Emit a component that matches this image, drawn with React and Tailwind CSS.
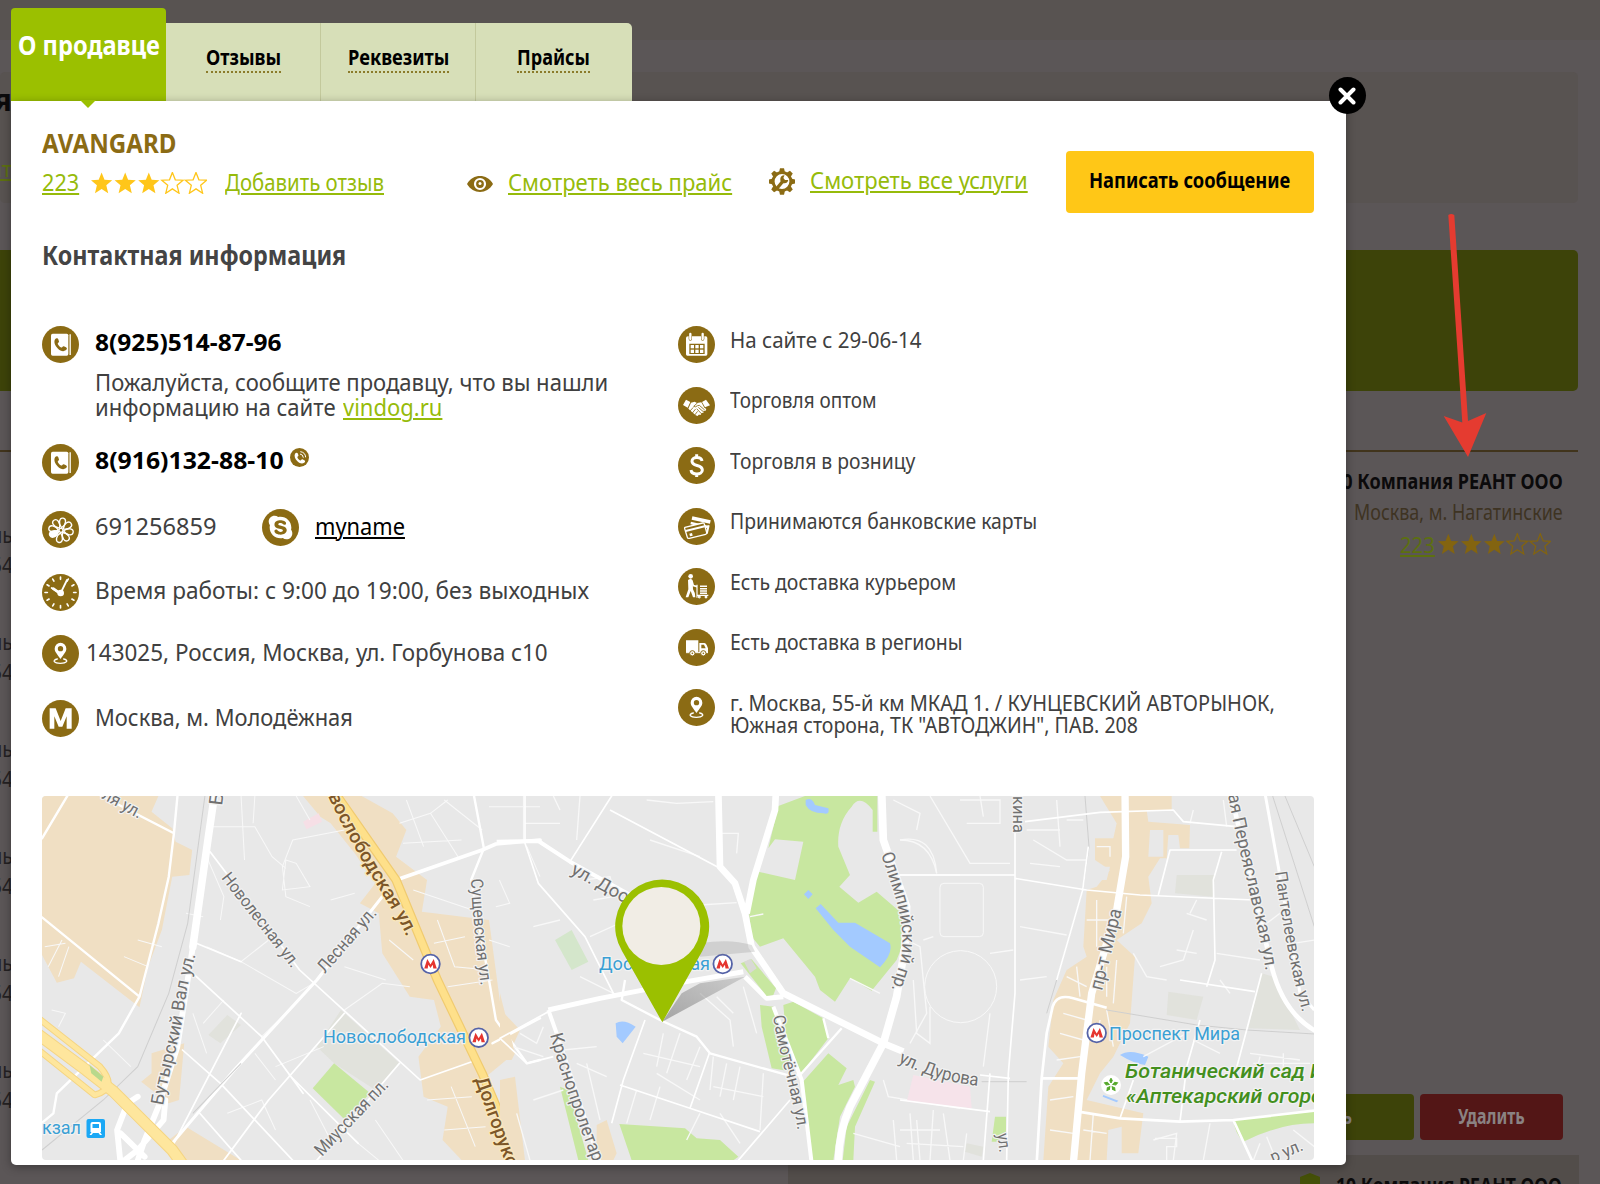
import { useLayoutEffect, useRef, useState } from "react";
import { FaSkype } from "react-icons/fa";

function Fit({ w, className = "", children }) {
  const ref = useRef(null);
  const [k, setK] = useState(1);
  useLayoutEffect(() => {
    setK(w / ref.current.offsetWidth);
  }, [w]);
  return (
    <span className="block shrink-0 whitespace-nowrap" style={{ width: w }}>
      <span ref={ref} className={"inline-block origin-left " + className} style={{ transform: `scaleX(${k})` }}>
        {children}
      </span>
    </span>
  );
}

const LINK = "text-[#96bb0a] underline decoration-[1.5px] underline-offset-[2px]";

function Stars({ className, color }) {
  const d = "M0-10.8 2.9-3.4 10.6-3 4.7 2.1 6.6 10 0 5.7-6.6 10-4.7 2.1-10.6-3-2.9-3.4Z";
  return (
    <svg viewBox="0 0 116 22" className={className}>
      {[0, 1, 2, 3, 4].map((i) => (
        <path
          key={i}
          d={d}
          transform={`translate(${10.6 + i * 23.6} 11.2)`}
          fill={i < 3 ? color : "none"}
          stroke={color}
          strokeWidth={i < 3 ? 0 : 1.3}
        />
      ))}
    </svg>
  );
}

/* ---------- round brown icons, drawn on a 111 x 111 grid ---------- */

function Badge({ children }) {
  return (
    <svg viewBox="0 0 111 111" className="size-[37px] shrink-0">
      <circle cx="55.5" cy="55.5" r="55.5" fill="#8b6b14" />
      {children}
    </svg>
  );
}

const HANDSET =
  "M-15-16c4-6 9-5 11 0l2 7c0 3-5 4-4 7 2 5 6 9 11 11 3 1 4-5 8-4l7 3c4 2 4 7-1 10-7 5-17 2-25-6-9-8-13-20-9-28Z";

const PhoneBook = () => (
  <Badge>
    <rect x="27" y="23" width="52" height="66" rx="5" fill="#fff" />
    <path d="M84.500 25v62" stroke="#fff" strokeWidth="4" />
    <path d={HANDSET} transform="translate(53 56) scale(.95)" fill="#8b6b14" />
  </Badge>
);

const Flower = () => (
  <Badge>
    <g fill="none" stroke="#fff" strokeWidth="4">
      {[0, 45, 90, 135, 180, 270, 315].map((a) => (
        <path key={a} d="M0-8C-13-20-11-37 0-37S13-20 0-8Z" transform={`translate(57 58) rotate(${a + 10})`} />
      ))}
      <circle cx="57" cy="58" r="6" />
    </g>
    <path d="M0-8C-13-20-11-37 0-37S13-20 0-8Z" transform="translate(57 58) rotate(245)" fill="#fff" stroke="#fff" strokeWidth="4" />
  </Badge>
);

const Skype = () => (
  <Badge>
    <g transform="translate(15 15)">
      <FaSkype size={81} color="#fff" />
    </g>
  </Badge>
);

const Clock = () => (
  <Badge>
    <g stroke="#fff" strokeWidth="5" strokeLinecap="round">
      {[0, 30, 60, 90, 120, 150, 180, 210, 240, 270, 300, 330].map((a) => (
        <path key={a} d="M55.5 9v7" transform={`rotate(${a} 55.5 55.5)`} />
      ))}
      <path d="M55 59 75 18M54 58 29 42" strokeWidth="5.5" />
    </g>
    <path d="M55 59 34 44" stroke="#fff" strokeWidth="8" strokeLinecap="round" />
    <circle cx="56" cy="57" r="10" fill="#fff" />
  </Badge>
);

const Pin = () => (
  <Badge>
    <path
      fillRule="evenodd"
      d="M55.5 72C45 56 38 50 38 41a17.500 17.500 0 0 1 35 0c0 9-7 15-17.500 31Zm0-39a8 8 0 1 0 0 16 8 8 0 0 0 0-16Z"
      fill="#fff"
    />
    <path d="M46 72c-17 4-10 13 9 13s27-9 10-13" fill="none" stroke="#fff" strokeWidth="4" strokeLinecap="round" />
  </Badge>
);

const Metro = () => (
  <Badge>
    <path d="M23 86V25h18l15 38 15-38h18v61H74V49L61 80H50L37 49v37Z" fill="#fff" />
  </Badge>
);

const Calendar = () => (
  <Badge>
    <path
      fillRule="evenodd"
      d="M24 36q0-5 6-5h2v8q0 5 5 5t5-5v-8h27v8q0 5 5 5t5-5v-8h4q5 0 5 5v49q0 4-4 4H28q-4 0-4-4ZM34 53v31h46V53Z"
      fill="#fff"
    />
    <path d="M37 24v15M74 24v15" stroke="#fff" strokeWidth="7" strokeLinecap="round" />
    <g fill="#fff">
      {[0, 1, 2].map((i) => (
        <g key={i}>
          <rect x={38 + i * 14} y="57" width="10" height="10" />
          <rect x={38 + i * 14} y="71" width="10" height="10" />
        </g>
      ))}
    </g>
  </Badge>
);

const Hands = () => (
  <Badge>
    <path d="M24 38 37 45 29 62 15 54ZM84 38 72 45 81 61 96 55Z" fill="#fff" />
    <path d="M39 47 50 44 57 48 70 46 79 62 85 66 82 72 76 71 77 77 70 78 69 83 62 83 59 87 53 85 31 65Z" fill="#fff" />
    <g fill="none" stroke="#8b6b14" strokeWidth="2.500" strokeLinecap="round">
      <path d="M58 48 47 58q5 4 12-2l5-1 15 13M62 62 76 74M57 66 69 79M37 71 45 62M44 77 52 67M51 83 58 74" />
    </g>
  </Badge>
);

const Dollar = () => (
  <Badge>
    <path d="M72 42C70 28 42 28 42 43c0 17 31 8 31 26 0 16-32 16-34 0M56 22v12M56 78v12" fill="none" stroke="#fff" strokeWidth="9" />
  </Badge>
);

const Cards = () => (
  <Badge>
    <g fill="none" stroke="#fff">
      <path d="m42 30 55 12" strokeWidth="11" />
      <path d="m38 45 52 12" strokeWidth="7" />
      <path d="m92 52-5 22-8 0" strokeWidth="6" />
      <path d="m21 58 53-13q4-1 5 3l7 25q1 4-3 6L34 91q-5 1-6-3l-8-26q-1-3 1-4Z" fill="#8b6b14" strokeWidth="4" />
      <path d="m23 69 57-14" strokeWidth="6" />
      <path d="m35 81 8-2" strokeWidth="8" />
    </g>
  </Badge>
);

const Courier = () => (
  <Badge>
    <circle cx="38" cy="25" r="7" fill="#fff" />
    <path d="M30 36q9-6 14 1l1 27q8 12 7 24h-7l-7-19-7 19h-8l8-24Z" fill="#fff" />
    <path d="m42 40 4 13 11 3" fill="none" stroke="#fff" strokeWidth="5" />
    <g fill="none" stroke="#fff" strokeWidth="3.500">
      <path d="M57 50v32h34M57 84v5" />
      <path d="M66 55h21M66 62h21M66 69h21M66 76h21" strokeWidth="4.500" />
      <circle cx="64" cy="87" r="2.500" />
      <circle cx="84" cy="87" r="2.500" />
    </g>
  </Badge>
);

const Truck = () => (
  <Badge>
    <path d="M24 34h37v36H24ZM64 42h15q4 0 7 6l4 10v14H64Z" fill="#fff" />
    <path d="M70 47h8l5 11H70Z" fill="#8b6b14" />
    <path d="M24 71h66" stroke="#fff" strokeWidth="3" />
    <g fill="#fff" stroke="#8b6b14" strokeWidth="3">
      <circle cx="43" cy="73" r="8" />
      <circle cx="76" cy="73" r="8" />
    </g>
    <circle cx="43" cy="73" r="2.500" fill="#8b6b14" />
    <circle cx="76" cy="73" r="2.500" fill="#8b6b14" />
  </Badge>
);

const Eye = () => (
  <svg viewBox="0 0 26 16" className="mt-[11px] h-4 w-[26px] shrink-0">
    <path d="M0 8C6-2.600 20-2.600 26 8 20 18.600 6 18.600 0 8Z" fill="#8b6b14" />
    <circle cx="13" cy="8" r="5" fill="#8b6b14" stroke="#fff" strokeWidth="2.200" />
    <circle cx="13" cy="7.500" r="1.500" fill="#fff" />
  </svg>
);

const Gear = () => (
  <svg viewBox="-13 -13.500 26 27" className="mt-1 h-[27px] w-[26px] shrink-0">
    {[0, 45, 90, 135, 180, 225, 270, 315].map((a) => (
      <path key={a} d="M-3-9-2-13.200H2L3-9Z" transform={`rotate(${a})`} fill="#8b6b14" />
    ))}
    <circle r="8.900" fill="#fff" stroke="#8b6b14" strokeWidth="3" />
    <path d="M-4.800 6.500 1.500-1" stroke="#8b6b14" strokeWidth="3.400" />
    <path d="M2.500-6.300A4 4 0 1 0 6.200-1.500L3-1.500 1.400-3.400Z" fill="#8b6b14" />
  </svg>
);

/* ---------- dimmed page behind the dialog ---------- */

function Backdrop() {
  return (
    <div className="flex h-full flex-col">
      <div className="h-10 shrink-0 bg-[#585351]" />
      <div className="mt-8 h-[131px] w-[1578px] shrink-0 rounded-[5px] bg-[#585351]">
        <div className="flex w-[12px] flex-col items-end overflow-hidden">
          <b className="mt-[6px] text-[30px] leading-[44px] text-[#0b0a0b]">я</b>
          <span className="mt-[32px] text-[22px] leading-[28px] text-[#5d7010] underline underline-offset-2">ат</span>
        </div>
      </div>
      <div className="-ml-2 mt-[47px] h-[141px] w-[1586px] shrink-0 rounded-[5px] bg-[#3d4309]" />
      <div className="mt-[59px] h-[2px] w-[1578px] shrink-0 bg-[#41341c]" />
      <div className="flex h-[704px] shrink-0 justify-between">
        <div className="flex w-[13px] flex-col items-end overflow-hidden pt-[68px] text-[21px] leading-[30px] text-[#242122]">
          {[0, 1, 2, 3, 4, 5].map((i) => (
            <div key={i} className="flex h-[107px] shrink-0 flex-col items-end">
              <Fit w={22}>ль</Fit>
              <Fit w={22}>54</Fit>
            </div>
          ))}
        </div>
        <div className="flex w-[300px] flex-col items-end pr-[37px]">
          <b className="mt-[14px] text-[21px] leading-[30px] text-[#0b0a0b]">
            <Fit w={231}>10 Компания РЕАНТ ООО</Fit>
          </b>
          <span className="mt-[1px] text-[21px] leading-[30px] text-[#3e3322]">
            <Fit w={209}>Москва, м. Нагатинские</Fit>
          </span>
          <div className="mt-[2px] flex items-center pr-[12px]">
            <Fit w={35} className="text-[22px] leading-[30px] text-[#5d7010] underline decoration-[1.5px] underline-offset-2">223</Fit>
            <Stars className="ml-[3px] h-[22px] w-[113px]" color="#836410" />
          </div>
          <div className="mt-[535px] flex gap-[6px]">
            <div className="flex h-[46px] w-[143px] justify-center rounded-[4px] bg-[#3d4309] text-[21px] leading-[45px] font-bold text-[#858080]">
              <Fit w={18}>ть</Fit>
            </div>
            <div className="flex h-[46px] w-[143px] justify-center rounded-[4px] bg-[#531616] text-[21px] leading-[45px] font-bold text-[#8a8282]">
              <Fit w={67}>Удалить</Fit>
            </div>
          </div>
        </div>
      </div>
      <div className="ml-[788px] mt-[-1px] flex h-[40px] w-[791px] shrink-0 justify-end bg-[#524d4a] pr-[17px]">
        <svg viewBox="0 0 20 22" className="mt-[18px] h-[22px] w-5">
          <path d="M10 0 20 4v8c0 6-6 9-10 10C6 21 0 18 0 12V4Z" fill="#445008" />
        </svg>
        <b className="ml-4 mt-[15px] text-[21px] leading-[30px] text-[#0b0a0b]">
          <Fit w={226}>10 Компания РЕАНТ ООО</Fit>
        </b>
      </div>
    </div>
  );
}

/* ---------- city map ---------- */

function MetroMark({ x, y }) {
  return (
    <g transform={`translate(${x} ${y})`}>
      <circle r="9.300" fill="#fff" stroke="#5563a8" strokeWidth="1.800" />
      <path d="M-6.300 4.500-3.200-5 0 0.500 3.200-5 6.300 4.500H2.800L2.200 0.800 0 4-2.200 0.800-2.800 4.500Z" fill="#e5352f" />
    </g>
  );
}

const STREETS = [
  ["ля ул.", "M101 798 139 819", 43, 17],
  ["Б", "M222 806 224 790", 13, 19],
  ["Бутырский Вал ул.", "M163 1106C170 1066 180 1040 184 1010S192 970 196 953", 155, 18],
  ["Новолесная ул.", "M221 878 293 970", 115, 17],
  ["Лесная ул.", "M325 974 378 913", 80, 18],
  ["Сущевская ул.", "M471 879C472 910 476 950 481 987", 107, 17],
  ["Миусская пл.", "M322 1157 391 1084", 98, 18],
  ["ул. Достоевского", "M570 873 704 947", 150, 18],
  ["Краснопролетарская", "M550 1035C562 1080 580 1130 606 1195", 172, 18],
  ["Самотёчная ул.", "M773 1016C780 1060 792 1090 798 1132", 117, 17],
  ["Олимпийский пр.", "M881 854C893 890 905 920 902 950 901 965 894 978 891 992", 140, 18],
  ["ул. Дурова", "M898 1062C915 1070 940 1082 980 1086", 84, 18],
  ["кина", "M1013 796 1013 834", 37, 17],
  ["ая Переяславская ул.", "M1228 795C1240 860 1258 920 1266 972", 180, 18],
  ["Пантелеевская ул.", "M1275 872C1282 920 1290 970 1303 1014", 143, 17],
  ["пр-т Мира", "M1102 991 1122 909", 83, 19],
  ["ул.", "M997 1134 1000 1156", 19, 17],
  ["р ул.", "M1273 1163 1306 1149", 34, 17],
];

function CityMap() {
  return (
    <svg viewBox="42 796 1272 364" className="block h-[364px] w-[1272px] rounded-[4px]">
      <defs>
        <linearGradient id="pinShadow" x1="0" y1="1" x2="1" y2="0">
          <stop offset="0" stopColor="#777" stopOpacity=".6" />
          <stop offset="1" stopColor="#777" stopOpacity=".25" />
        </linearGradient>
      </defs>
      <rect x="42" y="796" width="1272" height="364" fill="#e8e8e8" />

      {/* west: land */}
      <g transform="translate(0 780) scale(.34439 .33333)">
        <g fill="#f0dfc3">
          <path d="M122 48H460L440 95 500 145 510 185 558 210 550 285 500 290 470 450 430 560 405 682 235 545 215 595 165 608 122 525Z" />
          <path d="M880 48H1050L1140 100 1180 150 1150 230 1240 300 1225 395 1420 420 1455 690 1510 750 1470 840 1400 900 1430 1000 1520 1140H1340L1285 1080 1300 980 1230 950 1215 830 1280 740 1260 660 1190 650 1110 520 1100 400 1045 370 1090 310 1030 220 960 130 930 110Z" />
          <path d="M440 820 535 790 520 960 490 970 410 905 440 880ZM490 1080 540 1040 700 1141H520Z" />
        </g>
        <path d="M990 690 1160 850 1090 930 970 850 920 800ZM605 765 660 705 700 735 640 790Z" fill="#e1e2dc" />
        <path d="M970 850 1075 940 1000 1018 908 925Z" fill="#c8e7a0" />
        <path d="M880 125 925 100 935 125 890 148Z" fill="#f6dfe6" />
        <g fill="none" stroke="#f8f8f8" strokeWidth="3">
          <path d="M610 140H740L790 230 830 265M700 48 710 240M740 48 735 130M860 48 900 120M1000 150 850 180 820 260 830 350 900 380M600 230 650 350 640 420M830 240 860 250 900 320 820 330ZM960 360 1030 340M1160 130 1250 100 1300 60M1170 190 1340 180M1250 100 1330 230M1290 60 1400 150M1420 80H1568M1520 48V180M1180 60 1230 200M1200 330 1400 400M1270 420 1320 560 1420 570M1260 490 1350 470M1300 620 1430 600M1420 480 1480 500M1450 300 1480 370 1440 380M1530 200 1568 290M1130 480 1200 540M1240 960 1370 950M1290 1050 1410 1040M1310 920 1380 1100M560 700 600 820M650 660 590 730M600 500 700 545 780 480M700 545 860 640 910 610M760 770 860 670M740 820 800 900M800 860 940 800M660 1000 760 960 800 1050M900 960 960 1080M1040 1090 1100 1141M1090 1020 1170 1141M1000 560 1120 600M1000 690 1110 610 1190 620M130 500 190 490M140 560 180 480M170 590 200 500M150 690 190 700 170 740M300 780 380 860M540 400 590 410M400 480 470 500M360 530 430 560" />
        </g>
        <g fill="none" stroke="#fff" strokeLinecap="round" strokeLinejoin="round">
          <path d="M200 40 122 175M280 40 505 160M516 40 505 160 490 290 460 430 405 650 345 760 165 940 155 1000 120 1030M122 412 405 650" strokeWidth="7" />
          <path d="M610 215 870 570 1220 900 1370 845M560 580 760 770 880 940M530 810 640 910 850 1141M580 1000 700 1141M840 885 1040 1090M1160 850 920 1141M1000 700 780 960 650 1141M700 700 500 1100M570 490 700 545" strokeWidth="5" />
          <path d="M1110 350 920 600 680 870 500 1090" strokeWidth="9" />
          <path d="M1150 300 1400 210 1440 192 1568 180" strokeWidth="11" />
          <path d="M1375 40 1405 205 1368 300 1420 600 1440 720 1530 850 1568 840M1430 790 1568 715" strokeWidth="7" />
          <path d="M625 30 605 170 560 500" strokeWidth="22" />
          <path d="M560 500 515 800 460 980 420 1080 400 1141M480 960 475 1020 400 1110 350 1150 340 1050 370 970 400 950M350 1060 420 1130" strokeWidth="17" />
        </g>
        <path d="M595 48 545 430 490 640 400 860 300 960 122 1110M700 850 560 1000" fill="none" stroke="#cfcfcf" strokeWidth="3" />
        <g fill="none" strokeLinejoin="round">
          <path d="M100 755 250 870 330 935 500 1110 535 1160" stroke="#f5d583" strokeWidth="36" />
          <path d="M100 705 290 860Q345 925 275 945L100 800" stroke="#f5d583" strokeWidth="20" />
          <path d="M100 755 250 870 330 935 500 1110 535 1160" stroke="#fee69d" strokeWidth="30" />
          <path d="M100 705 290 860Q345 925 275 945L100 800" stroke="#fee69d" strokeWidth="14" />
          <path d="M260 855 300 890 295 905 265 880Z" fill="#b8d98c" />
          <path d="M960 20 1150 300 1270 600 1400 880 1515 1160" stroke="#f0cb70" strokeWidth="27" />
          <path d="M960 20 1150 300 1270 600 1400 880 1515 1160" stroke="#fee08a" strokeWidth="20" />
        </g>
      </g>

      {/* centre */}
      <g transform="translate(500 780) scale(.33333)">
        <g fill="#c8e7a0">
          <path d="M835 78 915 48H1132V155H1118V90Q1080 40 1055 80 1010 130 1015 200L1050 285 1018 320 1075 368 1130 335 1205 400Q1222 470 1190 540L1115 632 1050 595 1005 665 960 630 945 590 850 475 780 500 755 470 745 380 775 275 885 300 910 185 825 178 805 205Z" />
          <path d="M780 675 820 680 880 875 815 865 785 740ZM850 675 880 665 970 715 985 775 900 885 860 790ZM985 820 1040 865 1015 915 1060 900 1065 920 1020 1010 1000 1141H935L905 910ZM1110 900 1125 905 1065 1040 1060 1141H1028L1040 1040ZM358 1032 555 1045 590 1075 660 1080 715 1130 700 1141H395ZM180 920 205 930 265 1141H235Z" />
        </g>
        <path d="M165 480 215 450 265 545 215 570Z" fill="#d4e6cb" />
        <path d="M0 640 45 820 35 840 0 840ZM0 900 45 890 75 1141H0ZM290 1035 320 1020 350 1120 340 1141H290Z" fill="#f0dfc3" />
        <path d="M917 60Q935 50 945 75L985 85Q990 105 970 100 930 100 917 75ZM925 330 938 343 925 357 912 343ZM947 385 962 372 1015 428 1065 428 1170 490Q1180 520 1140 562L1050 500 1000 450ZM347 730Q370 715 407 740L368 790 350 770Z" fill="#a3caff" />
        <g fill="none" stroke="#f8f8f8" strokeWidth="4">
          <path d="M75 130H180M240 48 230 180M160 48 180 90M440 60 530 70 640 65M450 180 600 230M660 160H715L710 220M250 300 330 290 345 350M280 360 340 350M100 440 180 420M270 470 380 420M600 375 710 368M750 410 790 402M60 760 110 790 130 740M40 800 130 830M190 810 290 800M230 850 320 890M260 850 300 1020M490 760 470 860M540 760 500 880M430 820 600 860M600 800 560 900M470 880 600 960M640 830 630 930M680 850 660 950M720 860 700 960M640 920 790 950M790 880 780 1050M600 1000 560 1080M480 920 450 1020M410 930 380 1030M660 1000 720 1090M600 640 690 720 700 800M650 650 700 700M730 620 770 760M240 590 360 650M100 960 190 930M50 1000 90 1141M1150 900 1165 950 1380 985M1060 1060 1200 1100M1180 1020 1190 1140M1230 1000 1240 1141M1300 990 1290 1141M1180 60 1260 100 1250 150M1200 180Q1290 180 1310 280M1180 285H1380M1240 600 1250 760 1290 790 1290 680M1270 480 1300 470M1050 595 1140 640" />
        </g>
        <g fill="none" stroke="#fff" strokeLinejoin="round">
          <path d="M340 40 210 245M75 40 75 190 115 310 255 470 345 650M330 90 660 265M435 720 370 900 335 1030M360 915 570 985 780 1055M628 820 570 985M870 960 715 1141M145 695 0 775 80 850 160 830" strokeWidth="5" />
          <path d="M375 600 365 660 480 720 590 770 630 820 860 885 900 885 1025 745M970 715 985 775" strokeWidth="7" />
          <path d="M-10 185 115 183 210 245 400 350M145 690 170 760 300 1150M820 680 905 900 935 1150" strokeWidth="12" />
          <path d="M145 690 300 655 560 605 730 575M735 590 800 655 850 650" strokeWidth="15" />
          <path d="M655 30 660 260 705 310 735 400 755 500 850 640 1150 790 1210 815M828 30 825 90 760 300 740 400" strokeWidth="20" />
          <path d="M1145 30 1150 180 1220 380 1215 500 1190 650 1150 790 1050 980Q1015 1060 1015 1150" strokeWidth="23" />
        </g>
        <path d="M722 550 755 538 828 625 820 645 800 648Z" fill="#c8e7a0" />
        <path d="M732 545 752 536 770 565 750 580Z" fill="#d9d9d5" />
      </g>

      {/* east */}
      <g transform="translate(900 780) scale(.33333)">
        <path d="M600 48H815V90H740L745 125 870 135 868 205H840L835 165H805L800 235H780L745 290 755 370 725 430 650 480 705 530 690 730 640 830 600 880 560 960 730 1000 715 1120H665V1040L625 1050 620 1141H430L445 920 490 850 445 800 460 660 500 570 560 530 550 500 560 330 590 320 630 270 585 240V175H640L650 130Z" fill="#f0dfc3" />
        <path d="M750 150H790V230H745ZM605 260H630L620 300H600Z" fill="#e8e8e8" />
        <path d="M830 285H945L938 350 825 340ZM805 635 910 650 890 720 800 705ZM1085 580 1120 590 1200 750 1045 745ZM200 1090 250 1100 245 1130 195 1115Z" fill="#e1e2dc" />
        <path d="M40 885 210 920 215 985 20 965Z" fill="#f6e3ea" />
        <path d="M1000 1020Q1120 1000 1243 995V1030Q1140 1030 1030 1085 1005 1060 1000 1020ZM285 1010H318V1060L290 1085H275Z" fill="#c8e7a0" />
        <path d="M660 825Q690 805 745 830L735 855Q700 850 660 825ZM610 945 655 962 650 967 608 950Z" fill="#a3caff" />
        <g fill="none" stroke="#f8f8f8" strokeWidth="4">
          <circle cx="182" cy="620" r="108" strokeWidth="3" />
          <rect x="120" y="310" width="130" height="160" rx="12" strokeWidth="3" />
          <path d="M90 48 210 250 330 250M180 60H300V130H200M240 48 250 110M380 150H480M400 180 500 240H560M390 250 480 260M470 60 480 200M500 120H550M590 200H630V230M360 440 500 465M270 520 340 510M270 700 250 860M360 600 440 590M590 360V500M560 420H640M680 350 670 460M500 590 560 620M530 560 540 650M620 560V650M650 540 640 670M490 700 560 720M480 760 550 780M470 840 540 830M600 720 590 780M620 690 640 800M450 960 520 950M450 1050 520 1060M550 1050 620 1060M580 1000 570 1141M700 520 740 590 800 600M780 560 850 540 880 450M830 510 890 520M860 400 920 420M890 360 870 400M950 520 1080 540M960 600 990 640M730 830 860 760M880 780 960 820M1050 820 1200 840M1060 850 1230 850M1070 870 1080 830M1150 870V820M760 1080 830 1060 820 1141M930 1030 910 1141M1080 1090 1060 1141M1100 1070 1120 1120M1180 1050 1243 1100M200 1060 190 1141M130 1000 150 1141M50 1020 60 1141M20 1090 190 1100M970 60 980 140M880 90 870 130M1180 490 1243 480M1140 400 1100 430M0 180Q100 160 110 280M20 480 60 500 80 700 30 790M0 1050H120" />
          <path d="M765 1075H830V1100H800V1141" />
        </g>
        <g fill="none" stroke="#cfcfcf" strokeWidth="3">
          <path d="M555 48 567 200 548 330 470 600 440 700M1118 48 1243 440M1155 48 1243 260M620 690 890 735 1040 750 1243 762M245 905 380 905" />
        </g>
        <g fill="none" stroke="#fff" strokeLinejoin="round">
          <path d="M375 125 600 97 820 90 850 125 1010 140M345 40V640L325 880 320 1141M345 295 560 330 720 345 1060 360M0 285H345M1010 210H810L775 345M965 215 940 300 945 540 920 620M1085 580 1040 750 1000 900M840 600 1065 635M900 720 860 860 840 1025M270 880 250 1141M0 960 270 995M240 885 330 895M565 200 548 330 470 600M660 1015 700 900" strokeWidth="5" />
          <path d="M620 683 520 655Q470 640 458 680L440 760 425 895 410 1150M425 895H540M535 995 660 1015 840 1025 1000 1020 1243 992M1000 1020 1060 1150" strokeWidth="8" />
          <path d="M1095 40 1135 260 1200 640 1243 690" strokeWidth="9" />
          <path d="M990 30 1115 560Q1150 700 1250 755" strokeWidth="14" />
          <path d="M675 30 677 230 650 390 575 640 545 880 520 1150" strokeWidth="22" />
        </g>
      </g>

      {/* street names */}
      <g fontFamily="Roboto, sans-serif" fill="#707070" stroke="#f2f2f2" strokeWidth="2.500" paintOrder="stroke" strokeLinejoin="round">
        {STREETS.map(([name, d, len, size], i) => (
          <g key={name + i}>
            <path id={"street" + i} d={d} fill="none" stroke="none" />
            <text fontSize={size}>
              <textPath href={"#street" + i} textLength={len} lengthAdjust="spacingAndGlyphs">
                {name}
              </textPath>
            </text>
          </g>
        ))}
        <g fill="#7d5729" stroke="#fbe8bb" fontWeight="500" fontSize="19">
          <path id="novo" d="M328 796C347 838 374 880 386 900S402 925 408 940" fill="none" stroke="none" />
          <text>
            <textPath href="#novo" textLength="162" lengthAdjust="spacingAndGlyphs">вослободская ул.</textPath>
          </text>
          <path id="dolg" d="M475 1079C487 1113 496 1140 512 1180" fill="none" stroke="none" />
          <text fontSize="19">
            <textPath href="#dolg">Долгоруковская</textPath>
          </text>
        </g>
        <g fill="#3a9fd4" fontSize="18.500">
          <text x="323" y="1043" textLength="143" lengthAdjust="spacingAndGlyphs">Новослободская</text>
          <text x="599" y="970" textLength="111" lengthAdjust="spacingAndGlyphs">Достоевская</text>
          <text x="1109" y="1040" textLength="131" lengthAdjust="spacingAndGlyphs">Проспект Мира</text>
          <text x="42" y="1134" textLength="39" lengthAdjust="spacingAndGlyphs">кзал</text>
        </g>
        <g fill="#438f1d" fontSize="20" fontStyle="italic" fontWeight="500">
          <text x="1125" y="1078" textLength="180" lengthAdjust="spacingAndGlyphs">Ботанический сад</text>
          <text x="1310" y="1078">И</text>
          <text x="1126" y="1103" textLength="219" lengthAdjust="spacingAndGlyphs">«Аптекарский огород»</text>
        </g>
      </g>
      <MetroMark x={430.500} y={964} />
      <MetroMark x={478.700} y={1037.700} />
      <MetroMark x={722.700} y={964} />
      <MetroMark x={1096.700} y={1033} />
      <g transform="translate(86.500 1119)">
        <rect width="18.500" height="19" rx="2" fill="#1ba8f5" />
        <path fillRule="evenodd" d="M4 5q0-2 2-2h6.500q2 0 2 2v8h-1l2 3h-2l-1.500-2h-5.500L5 16H3l2-3H4Zm2 0v4h6.500V5Z" fill="#fff" />
      </g>
      <g transform="translate(1111 1085)">
        <circle r="10" fill="#fff" />
        {[0, 72, 144, 216, 288].map((a) => (
          <path key={a} d="M0-2-1.300-4.500 0-6.800 1.300-4.500Z" transform={`rotate(${a})`} fill="#55a82b" stroke="#55a82b" />
        ))}
      </g>

      {/* location pin */}
      <g transform="translate(500 780) scale(.33333)">
        <path d="M487 725 545 640 600 610 735 590Z" fill="url(#pinShadow)" />
        <path d="M600 490Q690 475 755 495L765 515 600 530Z" fill="#888" opacity=".25" />
        <path d="M487 727 366 513A141 141 0 1 1 607 513Z" fill="#9bc000" />
        <circle cx="484" cy="438" r="117" fill="#f1ede5" />
      </g>
    </svg>
  );
}

/* ---------- dialog ---------- */

const TABS = [
  ["Отзывы", 75],
  ["Реквезиты", 101],
  ["Прайсы", 73],
];

const FEATURES = [
  [Calendar, [["На сайте с 29-06-14", 191]]],
  [Hands, [["Торговля оптом", 147]]],
  [Dollar, [["Торговля в розницу", 185]]],
  [Cards, [["Принимаются банковские карты", 307]]],
  [Courier, [["Есть доставка курьером", 226]]],
  [Truck, [["Есть доставка в регионы", 233]]],
  [Pin, [["г. Москва, 55-й км МКАД 1. / КУНЦЕВСКИЙ АВТОРЫНОК,", 545], ['Южная сторона, ТК "АВТОДЖИН", ПАВ. 208', 408]]],
];

function ContactColumn() {
  return (
    <div className="w-[636px] text-[24px] leading-[32px] text-[#404040]">
      <div className="flex h-[118px] gap-[16px]">
        <PhoneBook />
        <div>
          <b className="text-black"><Fit w={187}>8(925)514-87-96</Fit></b>
          <div className="mt-[11px] leading-[25px]">
            <Fit w={513}>Пожалуйста, сообщите продавцу, что вы нашли</Fit>
            <div className="flex gap-[7px]">
              <Fit w={241}>информацию на сайте</Fit>
              <Fit w={99} className={LINK}>vindog.ru</Fit>
            </div>
          </div>
        </div>
      </div>
      <div className="flex h-[67px]">
        <PhoneBook />
        <b className="ml-[16px] text-black"><Fit w={189}>8(916)132-88-10</Fit></b>
        <svg viewBox="0 0 57 57" className="ml-[6px] mt-[4px] size-[19px]">
          <circle cx="28.500" cy="28.500" r="28.500" fill="#8b6b14" />
          <path d={HANDSET} transform="translate(27 30) scale(.8)" fill="#fff" />
          <path d="M30 18q9 1 10 11M31 11q15 2 16 17" fill="none" stroke="#fff" strokeWidth="3" />
        </svg>
      </div>
      <div className="flex h-[63px]">
        <Flower />
        <div className="ml-[16px] mt-[-1px]"><Fit w={122}>691256859</Fit></div>
        <div className="ml-[45px] mt-[-2px]"><Skype /></div>
        <div className="ml-[16px] mt-[-1px] text-black">
          <Fit w={90} className="underline decoration-[1.5px] underline-offset-[2px]">myname</Fit>
        </div>
      </div>
      <div className="flex h-[61px] gap-[16px]">
        <Clock />
        <Fit w={494}>Время работы: с 9:00 до 19:00, без выходных</Fit>
      </div>
      <div className="flex h-[65px] gap-[7px]">
        <Pin />
        <div className="mt-px"><Fit w={462}>143025, Россия, Москва, ул. Горбунова с10</Fit></div>
      </div>
      <div className="flex gap-[16px]">
        <Metro />
        <div className="mt-px"><Fit w={258}>Москва, м. Молодёжная</Fit></div>
      </div>
    </div>
  );
}

export default function App() {
  return (
    <div className="relative h-[1184px] w-[1600px] overflow-hidden bg-[#5b5657] font-['Noto_Sans','Open_Sans',sans-serif]">
      <Backdrop />

      <div className="absolute left-[11px] top-[8px] w-[1334.5px]">
        <div className="flex h-[93px] items-end">
          <div className="relative flex h-[93px] w-[155px] justify-center rounded-t-[4px] bg-[#9bc000] pt-[20px] text-[26px] font-bold leading-[34px] text-white">
            <Fit w={142}>О продавце</Fit>
            <svg viewBox="0 0 16 8" className="absolute left-[69px] top-[92px] z-10 h-2 w-4">
              <path d="M0 0H16L8 8Z" fill="#9bc000" />
            </svg>
          </div>
          <div className="flex h-[78px] w-[466px] divide-x divide-[#c3c99c] rounded-tr-[5px] bg-[#d7dfb8]">
            {TABS.map(([label, w]) => (
              <div key={label} className="flex w-[155px] justify-center pt-[19px]">
                <div className="h-[31px] border-b-2 border-dotted border-[#8b7b2a] text-[21px] font-bold leading-[30px] text-black">
                  <Fit w={w}>{label}</Fit>
                </div>
              </div>
            ))}
          </div>
        </div>

        <div className="relative h-[1064px] rounded-b-[5px] rounded-tr-[5px] bg-white px-[31px] shadow-[0_2px_10px_rgba(0,0,0,0.35)]">
          <div className="flex h-[138px] items-start pt-[26px]">
            <div>
              <div className="text-[27px] font-bold leading-[32px] text-[#8b6b14]">
                <Fit w={134}>AVANGARD</Fit>
              </div>
              <div className="mt-[7px] flex text-[24px] leading-[32px]">
                <Fit w={37} className={LINK}>223</Fit>
                <Stars className="ml-[12px] mt-[6px] h-[22px] w-[116px]" color="#ffc61a" />
                <div className="ml-[18px]"><Fit w={159} className={LINK}>Добавить отзыв</Fit></div>
              </div>
            </div>
            <div className="ml-[83px] mt-[38px] flex gap-[15px] text-[24px] leading-[32px]">
              <Eye />
              <div className="mt-px"><Fit w={224} className={LINK}>Смотреть весь прайс</Fit></div>
            </div>
            <div className="ml-[37px] mt-[37px] flex gap-[15px] text-[24px] leading-[32px]">
              <Gear />
              <Fit w={218} className={LINK}>Смотреть все услуги</Fit>
            </div>
            <div className="ml-[38px] mt-[24px] flex h-[62px] w-[248px] justify-center rounded-[4px] bg-[#ffc717] pr-[2px] pt-[14px] text-[20.5px] font-bold leading-[30px] text-black">
              <Fit w={201}>Написать сообщение</Fit>
            </div>
          </div>

          <h2 className="text-[27px] font-bold leading-[32px] text-[#444]">
            <Fit w={304}>Контактная информация</Fit>
          </h2>

          <div className="mt-[55px] flex h-[470px]">
            <ContactColumn />
            <div className="text-[21.5px] leading-[22px] text-[#404040]">
              {FEATURES.map(([Icon, lines]) => (
                <div key={lines[0][0]} className="flex h-[60.5px] gap-[14.5px]">
                  <Icon />
                  <div className="pt-[2.5px]">
                    {lines.map(([text, w]) => (
                      <Fit key={text} w={w}>{text}</Fit>
                    ))}
                  </div>
                </div>
              ))}
            </div>
          </div>

          <CityMap />

          <div className="absolute right-[-20px] top-[-24px] flex size-[37px] items-center justify-center rounded-full bg-black">
            <svg viewBox="0 0 18 18" className="size-[18px]">
              <path d="M2.500 2.500 15.500 15.500M15.500 2.500 2.500 15.500" stroke="#fff" strokeWidth="4" strokeLinecap="round" />
            </svg>
          </div>
        </div>
      </div>

      <svg viewBox="0 0 44 244" className="absolute left-[1443px] top-[214px] h-[244px] w-[44px]">
        <path d="M5.300 1Q8-1 11.300 1L25 207 43.300 199 25 243 .7 202 19.300 208.500Z" fill="#e53b30" />
      </svg>
    </div>
  );
}
